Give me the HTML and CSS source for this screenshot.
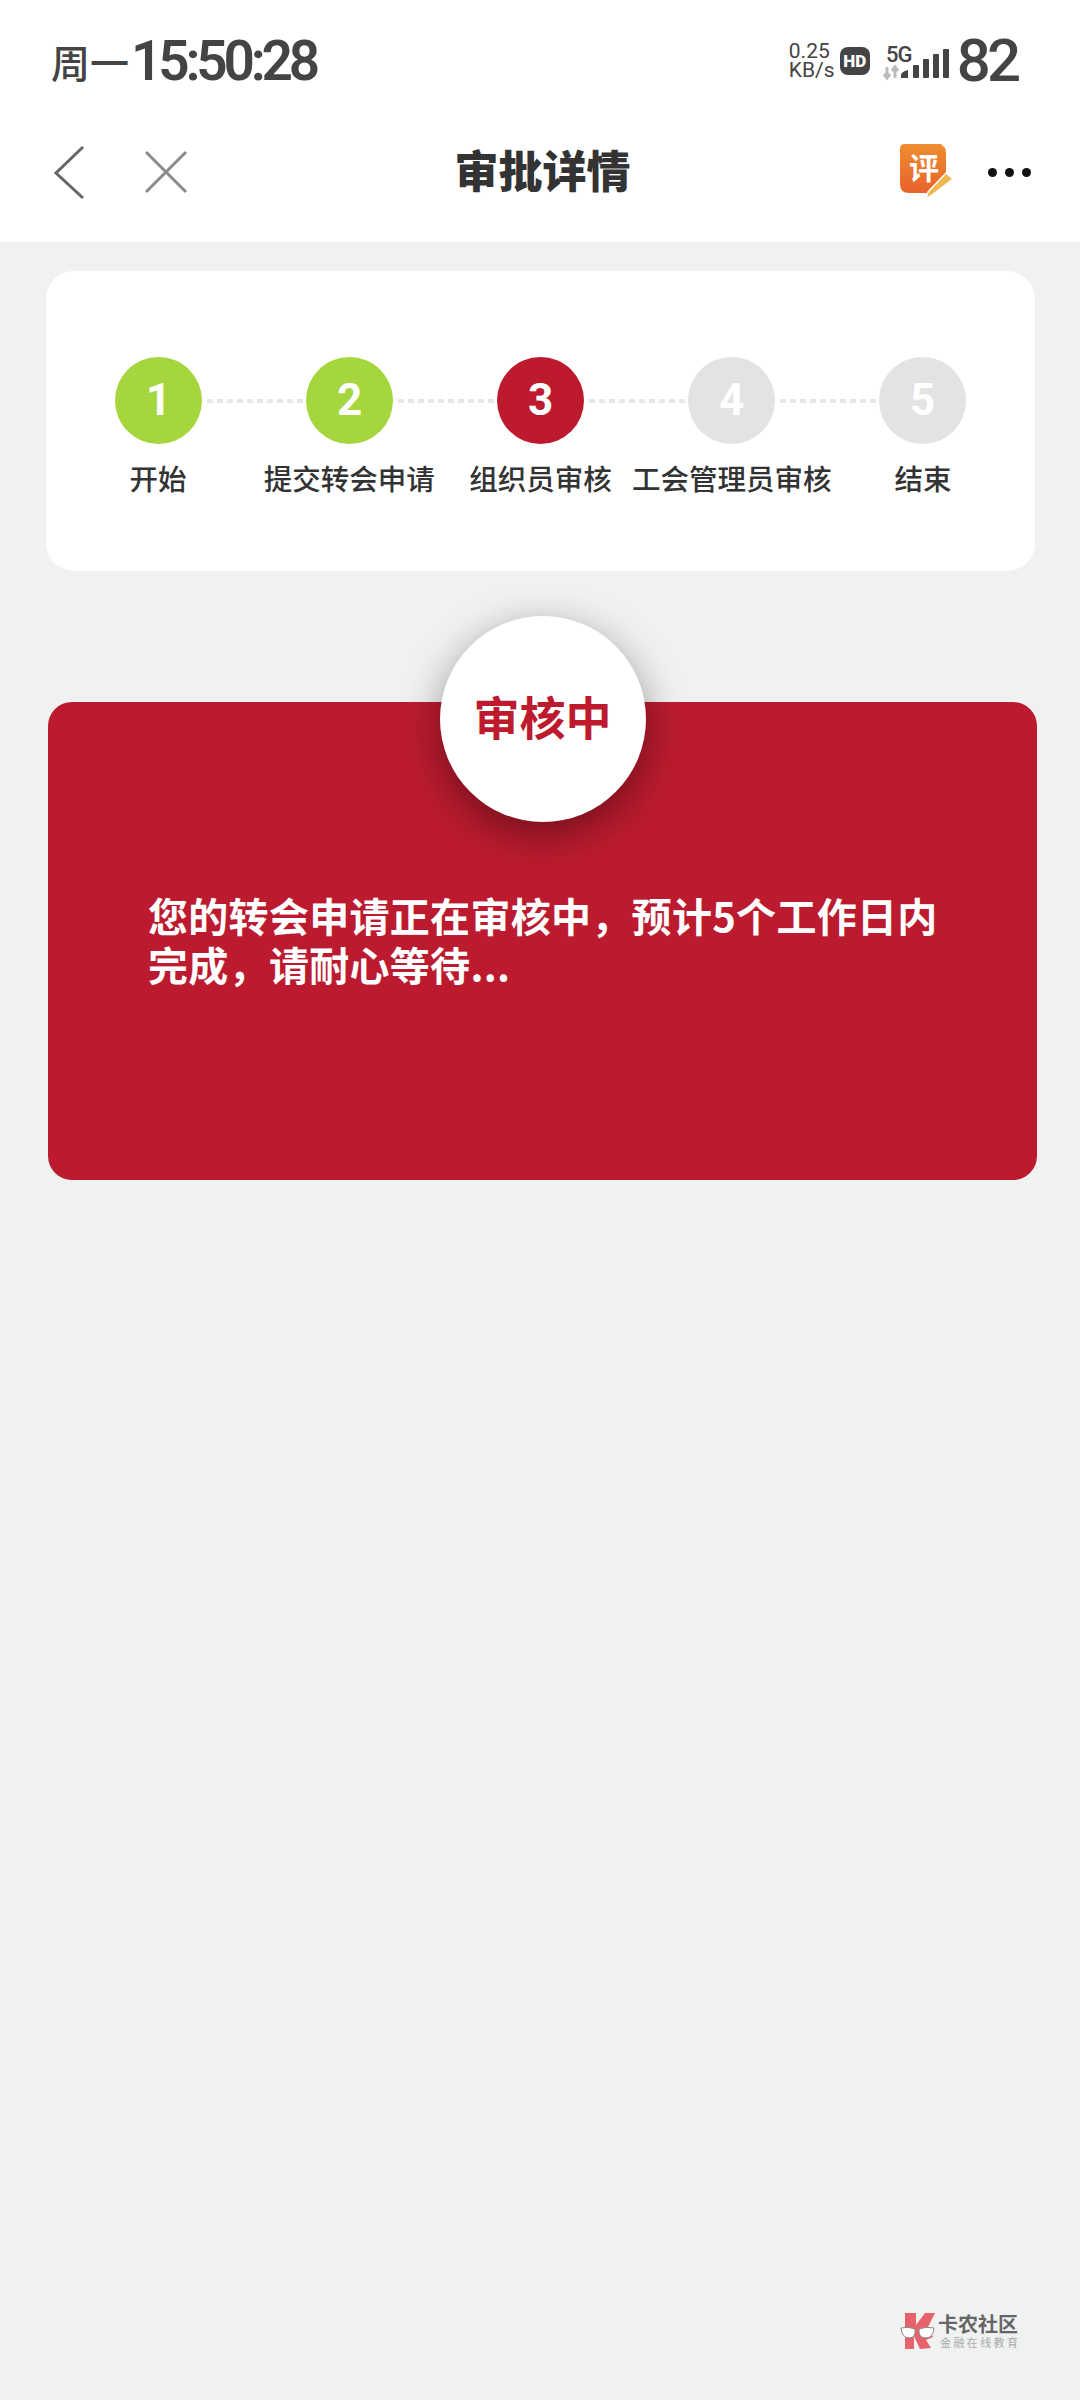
FILE: index.html
```html
<!DOCTYPE html>
<html lang="zh-CN">

<head>
    <meta charset="UTF-8">
    <meta name="viewport" content="width=device-width, initial-scale=1.0">
    <title>审批详情</title>
    <link rel="stylesheet" href="styles.css">
</head>

<body>
    <header class="top">
        <div class="status">
            <div class="clock"><span class="week">周一</span><span class="time">15:50:28</span></div>
            <div class="indicators">
                <div class="speed">0.25<br>KB/s</div>
                <div class="hd">HD</div>
                <svg class="signal" width="66" height="36" viewBox="0 0 66 36">
                    <text x="3" y="19" class="signal-text">5G</text>
                    <path d="M4 24v11M1 31l3 4 3-4" fill="none" stroke="#bbb" stroke-width="3"/>
                    <path d="M12 35V24M9 28l3-4 3 4" fill="none" stroke="#bbb" stroke-width="3"/>
                    <g fill="#444">
                        <path d="M18 35v-3q0-3 7-5v8z"/>
                        <rect x="30" y="22" width="6" height="13" rx="1"/>
                        <rect x="40" y="16" width="6" height="19" rx="1"/>
                        <rect x="50" y="11" width="6" height="24" rx="1"/>
                        <rect x="60" y="6" width="6" height="29" rx="1"/>
                    </g>
                </svg>
                <div class="battery">82</div>
            </div>
        </div>
        <nav class="nav">
            <div class="nav-left">
                <svg width="30" height="54" viewBox="0 0 30 54">
                    <path d="M29 2 2 28l27 25" fill="none" stroke="#666" stroke-width="3"/>
                </svg>
                <svg width="44" height="44" viewBox="0 0 44 44">
                    <path d="M2 2l40 40M42 2 2 42" fill="none" stroke="#8a8a8a" stroke-width="3"/>
                </svg>
            </div>
            <h1 class="title">审批详情</h1>
            <div class="nav-right">
                <svg class="rate" width="54" height="56" viewBox="0 0 54 56">
                    <defs>
                        <linearGradient id="rate" x1="0" y1="0" x2="0" y2="1">
                            <stop offset="0" stop-color="#ee8d2f"/>
                            <stop offset="1" stop-color="#e7622b"/>
                        </linearGradient>
                    </defs>
                    <path d="M5 0h36l4 4q1 2 1 6v19L28 49H9q-9 0-9-9V5q0-5 5-5z" fill="url(#rate)"/>
                    <text x="9" y="35" class="rate-text">评</text>
                    <path d="M46 29l7 6-21 16-6 4 2-7z" fill="#f0b84f" stroke="#fff" stroke-width="1.5"/>
                </svg>
                <div class="more"><i></i><i></i><i></i></div>
            </div>
        </nav>
    </header>

    <section class="card">
        <div class="track">
            <div class="dot done">1</div>
            <div class="line"></div>
            <div class="dot done">2</div>
            <div class="line"></div>
            <div class="dot now">3</div>
            <div class="line"></div>
            <div class="dot">4</div>
            <div class="line"></div>
            <div class="dot">5</div>
        </div>
        <div class="labels">
            <span>开始</span>
            <span>提交转会申请</span>
            <span>组织员审核</span>
            <span>工会管理员审核</span>
            <span>结束</span>
        </div>
    </section>

    <section class="panel">
        <div class="badge">审核中</div>
        <p class="message">您的转会申请正在审核中，预计5个工作日内完成，请耐心等待...</p>
    </section>

    <div class="mark">
        <svg width="36" height="38" viewBox="0 0 36 38">
            <path d="M5 1h11v12L25 1h10l-7 14 5 10-7 3 5 8-11 1-6-13v13H5z" fill="#e8626b"/>
            <path d="M1 16q7-2 14 1 1 9-6 9-7 0-8-10zM19 17q7-3 15-1-1 10-8 10-8 0-7-9z" fill="#fff" stroke="#888" stroke-width="1"/>
        </svg>
        <div class="mark-text">
            <b>卡农社区</b>
            <span>金融在线教育</span>
        </div>
    </div>
</body>

</html>
```

FILE: styles.css
```css
* {
    box-sizing: border-box;
}

body {
    position: relative;
    margin: 0;
    width: 1080px;
    height: 2400px;
    overflow: hidden;
    background: #F0F2F1;
    font-family: "Noto Sans CJK SC", "Noto Sans", sans-serif;
    color: #333;
}

svg {
    overflow: visible;
}

.top {
    height: 242px;
    background: #FFF;
}

.status {
    display: flex;
    justify-content: space-between;
    align-items: center;
    height: 122px;
    padding: 0 63px 0 51px;
    color: #444;
}

.clock {
    display: flex;
    align-items: center;
}

.week {
    font-size: 39px;
    font-weight: 500;
    margin-right: 2px;
}

.time {
    font-family: Roboto, sans-serif;
    font-size: 55px;
    font-weight: 600;
    letter-spacing: -4.2px;
}

.indicators {
    display: flex;
    align-items: center;
}

.speed {
    width: 51px;
    font-family: Roboto, sans-serif;
    font-size: 21px;
    line-height: 19px;
}

.hd {
    width: 30px;
    height: 28px;
    margin-right: 13px;
    border-radius: 8px;
    background: #444;
    color: #FFF;
    font-family: Roboto, sans-serif;
    font-size: 17px;
    font-weight: 900;
    line-height: 28px;
    text-align: center;
}

.signal {
    margin-right: 8px;
}

.signal-text {
    font-family: Roboto, sans-serif;
    font-size: 22px;
    font-weight: 500;
    letter-spacing: -1px;
    fill: #444;
}

.battery {
    font-family: Roboto, sans-serif;
    font-size: 60px;
    font-weight: 500;
    letter-spacing: -4px;
    line-height: 60px;
}

.nav {
    display: flex;
    justify-content: space-between;
    align-items: center;
    height: 100px;
    padding: 0 49px 0 54px;
}

.nav-left {
    display: flex;
    align-items: center;
    gap: 60px;
    width: 330px;
}

.title {
    margin: 0 0 7px;
    font-size: 44px;
    font-weight: 900;
    line-height: 60px;
}

.nav-right {
    display: flex;
    justify-content: flex-end;
    align-items: center;
    gap: 34px;
    width: 330px;
}

.rate-text {
    font-family: "Noto Sans CJK SC", sans-serif;
    font-size: 30px;
    font-weight: 700;
    fill: #FFF;
}

.more {
    display: flex;
    gap: 8px;
}

.more i {
    width: 9px;
    height: 9px;
    border-radius: 50%;
    background: #111;
}

.card {
    width: 989px;
    height: 300px;
    margin: 29px 0 0 46px;
    padding-top: 86px;
    border-radius: 28px;
    background: #FFF;
}

.track {
    display: flex;
    align-items: center;
    padding: 0 69px;
}

.dot {
    flex: none;
    width: 87px;
    height: 87px;
    border-radius: 50%;
    background: #E3E3E3;
    color: #FFF;
    font-family: Roboto, sans-serif;
    font-size: 44px;
    font-weight: 700;
    line-height: 87px;
    text-align: center;
}

.dot.done {
    background: #A5D63D;
}

.dot.now {
    background: #BD1A2E;
}

.line {
    flex: 1;
    height: 4px;
    margin: 0 3px 0 5px;
    background: repeating-linear-gradient(90deg, #E6E6E6 0 6px, transparent 6px 10px);
}

.labels {
    display: grid;
    grid-template-columns: repeat(5, 191.25px);
    justify-content: center;
    margin-top: 13px;
    font-size: 28.5px;
    font-weight: 500;
    line-height: 42px;
    white-space: nowrap;
}

/* the long label is wider than its column, keep it centred under the dot */
.labels span {
    display: flex;
    justify-content: center;
}

.panel {
    display: flow-root;
    width: 989px;
    height: 478px;
    margin: 131px 0 0 48px;
    border-radius: 24px;
    background: #BC1B2F;
}

.badge {
    width: 206px;
    height: 206px;
    margin: -86px auto 0;
    border-radius: 50%;
    background: #FFF;
    box-shadow: 0 12px 40px rgba(0, 0, 0, 0.4);
    color: #BD1A2E;
    font-size: 46px;
    font-weight: 700;
    line-height: 198px;
    text-align: center;
}

.message {
    margin: 69px 86px 0 100px;
    color: #FFF;
    font-size: 40px;
    font-weight: 700;
    letter-spacing: 0.3px;
    line-height: 49px;
}

/* forum watermark, sits on top of the page corner */
.mark {
    position: absolute;
    left: 900px;
    top: 2312px;
    display: flex;
    align-items: center;
    gap: 2px;
}

.mark-text {
    display: flex;
    flex-direction: column;
}

.mark-text b {
    color: #666;
    font-size: 20px;
    line-height: 22px;
}

.mark-text span {
    color: #AAA;
    font-size: 11px;
    letter-spacing: 2.4px;
    line-height: 14px;
    padding-left: 2px;
}
```
